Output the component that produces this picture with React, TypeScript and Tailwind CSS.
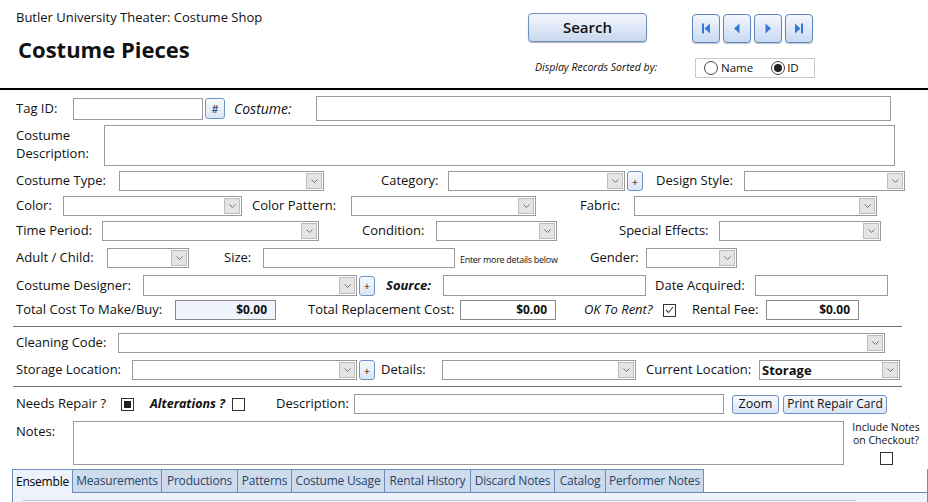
import React from "react";

function Combo({ className, value }: { className: string; value?: string }) {
  return (
    <div className={`flex h-full shrink-0 items-stretch border border-[#9a9a9a] bg-white ${className}`}>
      <div className="flex-1 truncate pl-[2px] text-[13px] font-bold leading-[18px]">{value}</div>
      <div className="my-px mr-px flex w-[16px] items-center justify-center border border-[#bdbdbd] bg-[#e4e4e4]">
        <svg width="7" height="4" viewBox="0 0 7 4">
          <path d="M0.5 0.5 L3.5 3.5 L6.5 0.5" fill="none" stroke="#707070" strokeWidth="1" />
        </svg>
      </div>
    </div>
  );
}

function Box({ className }: { className: string }) {
  return <div className={`shrink-0 border border-[#9a9a9a] bg-white ${className}`} />;
}

function Money({ className }: { className: string }) {
  return (
    <div className={`flex h-full shrink-0 items-center justify-end border border-[#8a8a8a] pr-[8px] text-[12px] font-bold ${className}`}>
      $0.00
    </div>
  );
}

function SmallBtn({ className, children }: { className: string; children: React.ReactNode }) {
  return (
    <div
      className={`flex shrink-0 items-center justify-center whitespace-nowrap rounded-[3px] border border-[#6f93c6] bg-linear-to-b from-[#f6f9fd] to-[#dbe6f5] text-[11px] leading-none ${className}`}
    >
      {children}
    </div>
  );
}

function Check({ mode }: { mode: "fill" | "tick" | "none" }) {
  return (
    <div className="flex h-[13px] w-[13px] shrink-0 items-center justify-center border border-[#333] bg-white">
      {mode === "fill" && <div className="h-[7px] w-[7px] bg-[#222]" />}
      {mode === "tick" && (
        <svg width="9" height="8" viewBox="0 0 9 8">
          <path d="M1 4 L3.5 6.5 L8 1" fill="none" stroke="#444" strokeWidth="1.1" />
        </svg>
      )}
    </div>
  );
}

function NavBtn({ children }: { children: React.ReactNode }) {
  return (
    <div className="flex h-[29px] w-[28px] items-center justify-center rounded-[4px] border border-[#5f86c2] bg-linear-to-b from-[#f3f7fd] to-[#c9daf2] shadow-[0_1px_1px_rgba(0,0,0,0.25)]">
      {children}
    </div>
  );
}

const tabs = [
  { name: "Ensemble", w: "w-[61px]" },
  { name: "Measurements", w: "w-[89px]" },
  { name: "Productions", w: "w-[76px]" },
  { name: "Patterns", w: "w-[54px]" },
  { name: "Costume Usage", w: "w-[93px]" },
  { name: "Rental History", w: "w-[86px]" },
  { name: "Discard Notes", w: "w-[84px]" },
  { name: "Catalog", w: "w-[51px]" },
  { name: "Performer Notes", w: "w-[98px]" },
];

export default function App() {
  return (
    <div className="h-[502px] w-[928px] overflow-hidden bg-white font-['Open_Sans',sans-serif] text-[13px] text-[#111]">
      {/* header */}
      <div className="flex h-[90px] border-b-2 border-black">
        <div className="w-[528px] shrink-0 pl-[16px] pt-[8px]">
          <div className="text-[13px] leading-[18px]">Butler University Theater: Costume Shop</div>
          <div className="mt-[9px] pl-[2px] text-[22px] font-bold leading-[28px]">Costume Pieces</div>
        </div>
        <div className="flex flex-col pt-[13px]">
          <div className="flex">
            <div className="flex h-[29px] w-[119px] items-center justify-center rounded-[4px] border border-[#6e8fc0] bg-linear-to-b from-[#f4f7fc] to-[#c8d8ef] text-[15px] font-semibold shadow-[0_1px_1px_rgba(0,0,0,0.3)]">
              Search
            </div>
            <div className="ml-[45px] mt-[1px] flex gap-[3px]">
              <NavBtn>
                <svg width="10" height="11" viewBox="0 0 10 11">
                  <rect x="1" y="0.5" width="2" height="10" fill="#3a78d6" />
                  <path d="M9 0.5 L3.5 5.5 L9 10.5 Z" fill="#3a78d6" />
                </svg>
              </NavBtn>
              <NavBtn>
                <svg width="8" height="11" viewBox="0 0 8 11">
                  <path d="M6.5 0.5 L1 5.5 L6.5 10.5 Z" fill="#3a78d6" />
                </svg>
              </NavBtn>
              <NavBtn>
                <svg width="8" height="11" viewBox="0 0 8 11">
                  <path d="M1.5 0.5 L7 5.5 L1.5 10.5 Z" fill="#3a78d6" />
                </svg>
              </NavBtn>
              <NavBtn>
                <svg width="10" height="11" viewBox="0 0 10 11">
                  <path d="M1 0.5 L6.5 5.5 L1 10.5 Z" fill="#3a78d6" />
                  <rect x="7" y="0.5" width="2" height="10" fill="#3a78d6" />
                </svg>
              </NavBtn>
            </div>
          </div>
          <div className="mt-[15px] flex items-center">
            <span className="w-[167px] pl-[7px] text-[10.5px] italic">Display Records Sorted by:</span>
            <div className="flex h-[20px] w-[120px] items-center border border-[#c8c8c8] pl-[8px] text-[11.5px]">
              <div className="h-[14px] w-[14px] rounded-full border border-[#444] bg-white" />
              <span className="ml-[3px]">Name</span>
              <div className="ml-[18px] flex h-[14px] w-[14px] items-center justify-center rounded-full border border-[#444] bg-white">
                <div className="h-[8px] w-[8px] rounded-full bg-[#222]" />
              </div>
              <span className="ml-[2px]">ID</span>
            </div>
          </div>
        </div>
      </div>

      {/* row 1 */}
      <div className="mt-[6px] flex h-[25px] items-center pl-[16px]">
        <span className="w-[57px] shrink-0">Tag ID:</span>
        <Box className="h-[22px] w-[130px]" />
        <SmallBtn className="ml-[2px] h-[21px] w-[20px]">#</SmallBtn>
        <span className="ml-[9px] w-[82px] shrink-0 text-[14px] italic">Costume:</span>
        <Box className="h-[25px] w-[575px]" />
      </div>

      {/* row 2 */}
      <div className="mt-[4px] flex h-[41px] items-start pl-[16px]">
        <span className="w-[88px] shrink-0 pt-[1px] leading-[18px]">
          Costume
          <br />
          Description:
        </span>
        <Box className="h-[41px] w-[791px]" />
      </div>

      {/* row 3 */}
      <div className="mt-[5px] flex h-[20px] items-center pl-[16px]">
        <span className="w-[103px] shrink-0">Costume Type:</span>
        <Combo className="w-[205px]" />
        <span className="w-[124px] shrink-0 pl-[57px]">Category:</span>
        <Combo className="w-[177px]" />
        <SmallBtn className="ml-[2px] h-[20px] w-[16px]">+</SmallBtn>
        <span className="w-[101px] shrink-0 pl-[13px]">Design Style:</span>
        <Combo className="w-[161px]" />
      </div>

      {/* row 4 */}
      <div className="mt-[5px] flex h-[20px] items-center pl-[16px]">
        <span className="w-[47px] shrink-0">Color:</span>
        <Combo className="w-[179px]" />
        <span className="w-[109px] shrink-0 pl-[10px]">Color Pattern:</span>
        <Combo className="w-[185px]" />
        <span className="w-[98px] shrink-0 pl-[44px]">Fabric:</span>
        <Combo className="w-[243px]" />
      </div>

      {/* row 5 */}
      <div className="mt-[5px] flex h-[20px] items-center pl-[16px]">
        <span className="w-[86px] shrink-0">Time Period:</span>
        <Combo className="w-[217px]" />
        <span className="w-[117px] shrink-0 pl-[43px]">Condition:</span>
        <Combo className="w-[121px]" />
        <span className="w-[162px] shrink-0 whitespace-nowrap pl-[62px]">Special Effects:</span>
        <Combo className="w-[162px]" />
      </div>

      {/* row 6 */}
      <div className="mt-[7px] flex h-[20px] items-center pl-[16px]">
        <span className="w-[91px] shrink-0">Adult / Child:</span>
        <Combo className="w-[82px]" />
        <span className="w-[74px] shrink-0 pl-[35px]">Size:</span>
        <Box className="h-[20px] w-[192px]" />
        <span className="w-[135px] shrink-0 whitespace-nowrap pl-[5px] pt-[3px] text-[9px] tracking-[-0.3px]">Enter more details below</span>
        <span className="w-[56px] shrink-0">Gender:</span>
        <Combo className="w-[91px]" />
      </div>

      {/* row 7 */}
      <div className="mt-[7px] flex h-[21px] items-center pl-[16px]">
        <span className="w-[127px] shrink-0">Costume Designer:</span>
        <Combo className="w-[214px]" />
        <SmallBtn className="ml-[2px] h-[20px] w-[16px]">+</SmallBtn>
        <span className="w-[68px] shrink-0 pl-[11px] font-bold italic">Source:</span>
        <Box className="h-[21px] w-[203px]" />
        <span className="w-[109px] shrink-0 pl-[9px]">Date Acquired:</span>
        <Box className="h-[21px] w-[133px]" />
      </div>

      {/* row 8 */}
      <div className="mt-[4px] flex h-[20px] items-center pl-[16px]">
        <span className="w-[159px] shrink-0 whitespace-nowrap">Total Cost To Make/Buy:</span>
        <Money className="w-[101px] bg-[#eef3fc]" />
        <span className="w-[184px] shrink-0 whitespace-nowrap pl-[32px]">Total Replacement Cost:</span>
        <Money className="w-[96px] bg-white" />
        <span className="w-[107px] shrink-0 whitespace-nowrap pl-[28px] italic">OK To Rent?</span>
        <Check mode="tick" />
        <span className="w-[90px] shrink-0 pl-[16px]">Rental Fee:</span>
        <Money className="w-[93px] bg-white" />
      </div>

      <div className="ml-[13px] mt-[6px] h-px w-[889px] bg-[#6f6f6f]" />

      {/* row 9 */}
      <div className="mt-[6px] flex h-[20px] items-center pl-[16px]">
        <span className="w-[102px] shrink-0">Cleaning Code:</span>
        <Combo className="w-[767px]" />
      </div>

      {/* row 10 */}
      <div className="mt-[7px] flex h-[20px] items-center pl-[16px]">
        <span className="w-[116px] shrink-0">Storage Location:</span>
        <Combo className="w-[225px]" />
        <SmallBtn className="ml-[2px] h-[20px] w-[16px]">+</SmallBtn>
        <span className="w-[67px] shrink-0 pl-[6px]">Details:</span>
        <Combo className="w-[194px]" />
        <span className="w-[123px] shrink-0 whitespace-nowrap pl-[10px]">Current Location:</span>
        <Combo className="w-[141px]" value="Storage" />
      </div>

      <div className="ml-[13px] mt-[6px] h-px w-[889px] bg-[#6f6f6f]" />

      {/* row 11 */}
      <div className="mt-[7px] flex h-[20px] items-center pl-[16px]">
        <span className="w-[105px] shrink-0">Needs Repair ?</span>
        <Check mode="fill" />
        <span className="w-[98px] shrink-0 whitespace-nowrap pl-[16px] text-[12.5px] font-bold italic">Alterations ?</span>
        <Check mode="none" />
        <span className="w-[109px] shrink-0 pl-[31px]">Description:</span>
        <Box className="h-[20px] w-[370px]" />
        <SmallBtn className="ml-[8px] h-[19px] w-[47px] text-[12.5px]">Zoom</SmallBtn>
        <SmallBtn className="ml-[4px] h-[19px] w-[104px] text-[12px]">Print Repair Card</SmallBtn>
      </div>

      {/* notes */}
      <div className="mt-[7px] flex h-[44px] items-start pl-[16px]">
        <span className="w-[57px] shrink-0 pt-[1px]">Notes:</span>
        <Box className="h-[44px] w-[771px]" />
        <div className="flex w-[84px] shrink-0 flex-col items-center text-[10.5px] leading-[13px]">
          <span className="whitespace-nowrap">Include Notes</span>
          <span className="whitespace-nowrap">on Checkout?</span>
          <div className="mt-[5px]">
            <Check mode="none" />
          </div>
        </div>
      </div>

      {/* tabs */}
      <div className="ml-[12px] mt-[4px] w-[916px]">
        <div className="flex h-[24px]">
          {tabs.map((t, i) => (
            <div
              key={t.name}
              className={`flex shrink-0 items-center justify-center whitespace-nowrap border-t border-r border-[#6c8ebf] text-[12px] tracking-[-0.2px] ${t.w} ${
                i === 0 ? "border-l bg-[#eef2fa] text-black" : "border-b bg-[#cedbec] text-[#2a4466]"
              }`}
            >
              {t.name}
            </div>
          ))}
          <div className="flex-1 border-b border-r border-[#6c8ebf]" />
        </div>
        <div className="h-[20px] border-l border-r border-[#6c8ebf] bg-[#eef2fa] pt-[7px]">
          <div className="ml-[10px] h-px w-[833px] bg-[#b9c7db]" />
        </div>
      </div>
    </div>
  );
}
